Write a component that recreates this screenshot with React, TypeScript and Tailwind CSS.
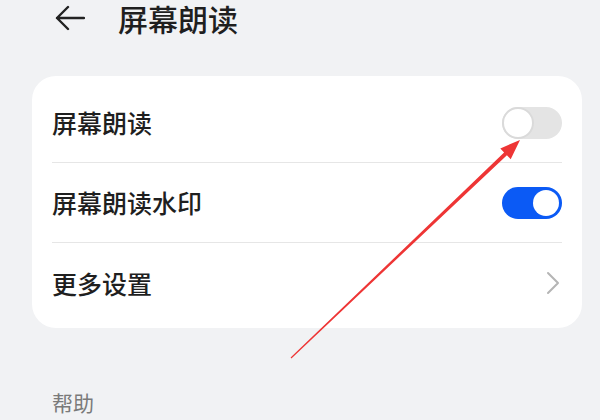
import React from "react";

const font = { fontFamily: '"Noto Sans CJK SC", "Noto Sans", sans-serif' };

function Row({ label, right, last }: { label: string; right: React.ReactNode; last?: boolean }) {
  return (
    <div className="px-[20px]">
      <div className={`flex h-[80px] items-center justify-between ${last ? "" : "border-b border-[#e6e6e6]"}`}>
        <span className="text-[25px] font-medium leading-none text-[#1f1f1f]">{label}</span>
        {right}
      </div>
    </div>
  );
}

export default function App() {
  return (
    <div className="relative h-[420px] w-[600px] overflow-hidden bg-[#f1f2f4]" style={font}>
      <div className="flex h-[36px] items-center pl-[55px]">
        <svg width="30" height="26" viewBox="0 0 30 26" fill="none" stroke="#222" strokeWidth="2.4" strokeLinecap="round" strokeLinejoin="round">
          <path d="M29 13H2M13 2L2 13l11 11" />
        </svg>
        <span className="ml-[33px] text-[30px] font-medium leading-[36px] text-[#1f1f1f]">屏幕朗读</span>
      </div>

      <div className="ml-[32px] mt-[40px] w-[550px] rounded-[24px] bg-white pb-[5px] pt-[7px]">
        <Row
          label="屏幕朗读"
          right={
            <div className="flex h-[32px] w-[60px] items-center rounded-full bg-[#e4e4e4]">
              <div className="h-[32px] w-[32px] rounded-full border-2 border-[#dadada] bg-white" />
            </div>
          }
        />
        <Row
          label="屏幕朗读水印"
          right={
            <div className="flex h-[32px] w-[60px] items-center justify-end rounded-full bg-[#0b5af5] pr-[3px]">
              <div className="h-[26px] w-[26px] rounded-full bg-white" />
            </div>
          }
        />
        <Row
          label="更多设置"
          last
          right={
            <svg width="14" height="24" viewBox="0 0 14 24" fill="none" stroke="#b5b5b5" strokeWidth="2" strokeLinecap="round" strokeLinejoin="round" className="mr-[2px]">
              <path d="M2 2l10 10-10 10" />
            </svg>
          }
        />
      </div>

      <div className="ml-[52px] mt-[64px] text-[21px] leading-none text-[#7a7a7a]">帮助</div>

      <svg className="pointer-events-none absolute left-0 top-0" width="600" height="420" viewBox="0 0 600 420">
        <polygon
          points="291.4,358.4 506.9,155.2 510.7,159.2 520,140 500.3,148.4 504.1,152.4 290.6,357.6"
          fill="#ee3535"
        />
      </svg>
    </div>
  );
}
